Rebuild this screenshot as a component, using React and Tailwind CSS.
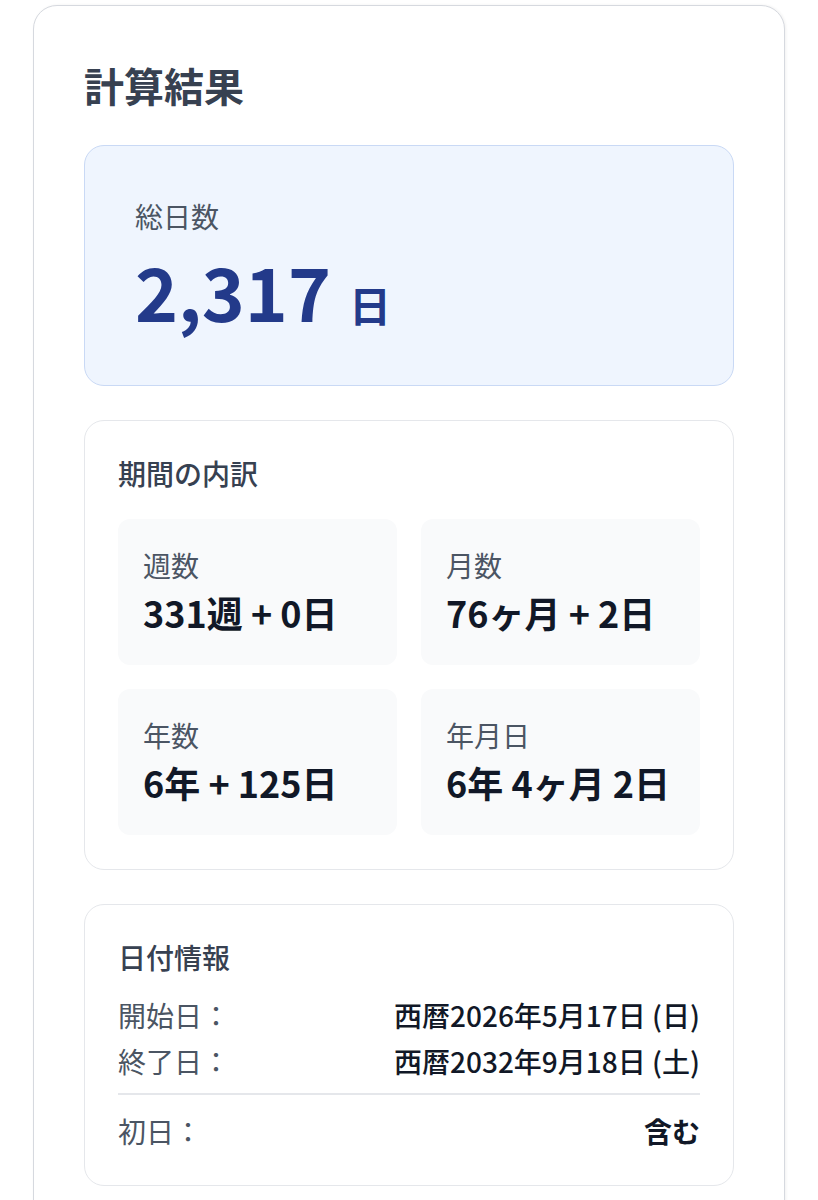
export default function App() {
  const font = { fontFamily: '"Noto Sans CJK JP", "Noto Sans", sans-serif' };
  const items = [
    { label: "週数", value: "331週 + 0日" },
    { label: "月数", value: "76ヶ月 + 2日" },
    { label: "年数", value: "6年 + 125日" },
    { label: "年月日", value: "6年 4ヶ月 2日" },
  ];
  return (
    <div className="min-h-[1200px] bg-white pt-[5px]" style={font}>
      <div className="ml-[33px] w-[752px] rounded-[24px] border border-[#d6d9df] bg-white px-[50px] pt-[55px] pb-[48px] shadow-[1px_0_3px_rgba(0,0,0,0.06)]">
        <h1 className="text-[40px] leading-[48px] font-bold text-[#374151]">計算結果</h1>

        <div className="mt-[36px] h-[241px] rounded-[20px] border-[1.5px] border-[#c9d9f5] bg-[#eff5fe] px-[50px] pt-[52px]">
          <div className="text-[28px] leading-[36px] text-[#4b5563]">総日数</div>
          <div className="mt-[3px] flex items-baseline">
            <span className="text-[73px] leading-[107px] font-bold text-[#233a8a]">2,317</span>
            <span className="ml-[18px] text-[42px] leading-[50px] font-bold text-[#233a8a]">日</span>
          </div>
        </div>

        <div className="mt-[34px] rounded-[20px] border border-[#e5e7eb] px-[33px] pt-[34px] pb-[34px]">
          <div className="text-[28px] leading-[36px] font-medium text-[#374151]">期間の内訳</div>
          <div className="mt-[28px] grid grid-cols-2 gap-[24px]">
            {items.map((it) => (
              <div key={it.label} className="h-[146px] rounded-[12px] bg-[#f9fafb] px-[25px] pt-[28px]">
                <div className="text-[28px] leading-[36px] text-[#4b5563]">{it.label}</div>
                <div className="mt-[7px] text-[36px] leading-[44px] font-bold text-[#111827]">{it.value}</div>
              </div>
            ))}
          </div>
        </div>

        <div className="mt-[34px] rounded-[20px] border border-[#e5e7eb] px-[33px] pt-[34px] pb-[36px]">
          <div className="text-[28px] leading-[36px] font-medium text-[#374151]">日付情報</div>
          <div className="mt-[22px] flex flex-col gap-[10px]">
            <div className="flex justify-between text-[28px] leading-[36px]">
              <span className="text-[#4b5563]">開始日：</span>
              <span className="font-medium text-[#111827]">西暦2026年5月17日 (日)</span>
            </div>
            <div className="flex justify-between text-[28px] leading-[36px]">
              <span className="text-[#4b5563]">終了日：</span>
              <span className="font-medium text-[#111827]">西暦2032年9月18日 (土)</span>
            </div>
          </div>
          <div className="mt-[14px] border-t-[2px] border-[#e5e7eb] pt-[18px]">
            <div className="flex justify-between text-[28px] leading-[36px]">
              <span className="text-[#4b5563]">初日：</span>
              <span className="font-bold text-[#111827]">含む</span>
            </div>
          </div>
        </div>
      </div>
    </div>
  );
}
